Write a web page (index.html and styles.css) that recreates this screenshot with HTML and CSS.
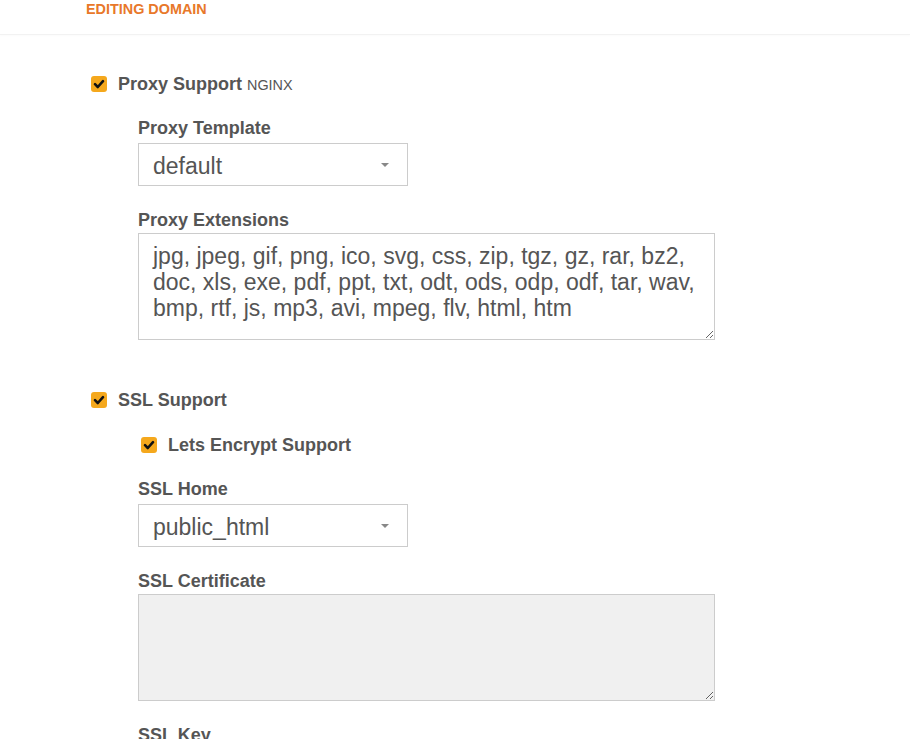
FILE: index.html
```html
<!DOCTYPE html>
<html>
<head>
<meta charset="utf-8">
<link rel="stylesheet" href="styles.css">
</head>
<body>
<header class="topbar"><span class="title">EDITING DOMAIN</span></header>
<main class="form">
  <div class="check-row">
    <span class="check"><svg viewBox="0 0 16 16" width="16" height="16"><path d="M4 8.2 L6.8 11 L12 5.2" fill="none" stroke="#111" stroke-width="2.6" stroke-linecap="round" stroke-linejoin="round"/></svg></span>
    <span class="check-label">Proxy Support <span class="tag">NGINX</span></span>
  </div>
  <div class="sub">
    <div class="field">
      <label class="label">Proxy Template</label>
      <div class="select"><span>default</span><svg class="caret" width="8" height="4" viewBox="0 0 8 4"><path d="M0 0 H8 L4 4 Z" fill="#888"/></svg></div>
    </div>
    <div class="field ext">
      <label class="label">Proxy Extensions</label>
      <textarea class="area">jpg, jpeg, gif, png, ico, svg, css, zip, tgz, gz, rar, bz2, doc, xls, exe, pdf, ppt, txt, odt, ods, odp, odf, tar, wav, bmp, rtf, js, mp3, avi, mpeg, flv, html, htm</textarea>
    </div>
  </div>

  <div class="check-row ssl">
    <span class="check"><svg viewBox="0 0 16 16" width="16" height="16"><path d="M4 8.2 L6.8 11 L12 5.2" fill="none" stroke="#111" stroke-width="2.6" stroke-linecap="round" stroke-linejoin="round"/></svg></span>
    <span class="check-label">SSL Support</span>
  </div>
  <div class="sub">
    <div class="check-row le">
      <span class="check"><svg viewBox="0 0 16 16" width="16" height="16"><path d="M4 8.2 L6.8 11 L12 5.2" fill="none" stroke="#111" stroke-width="2.6" stroke-linecap="round" stroke-linejoin="round"/></svg></span>
      <span class="check-label">Lets Encrypt Support</span>
    </div>
    <div class="field home">
      <label class="label">SSL Home</label>
      <div class="select"><span>public_html</span><svg class="caret" width="8" height="4" viewBox="0 0 8 4"><path d="M0 0 H8 L4 4 Z" fill="#888"/></svg></div>
    </div>
    <div class="field cert">
      <label class="label">SSL Certificate</label>
      <textarea class="area" disabled></textarea>
    </div>
    <div class="field">
      <label class="label">SSL Key</label>
    </div>
  </div>
</main>
</body>
</html>
```
FILE: styles.css
```css
html, body {
  margin: 0;
  padding: 0;
  background: #fff;
  font-family: "Liberation Sans", Arial, sans-serif;
  color: #555;
}
.topbar {
  height: 34px;
  border-bottom: 1px solid #f2f2f2;
  box-shadow: 0 1px 2px rgba(0,0,0,0.02);
  padding: 0 0 0 86px;
  box-sizing: content-box;
}
.title {
  display: block;
  font-size: 14.4px;
  line-height: 18px;
  font-weight: bold;
  color: #e8782a;
}
.form {
  padding: 39px 0 0 88px;
}
.check-row {
  display: flex;
  align-items: center;
  height: 20px;
}
.check {
  width: 16px;
  height: 16px;
  margin-left: 3px;
  margin-right: 11px;
  background: #f5a81c;
  border-radius: 3px;
  display: flex;
}
.check-label {
  font-size: 18px;
  font-weight: bold;
  line-height: 20px;
}
.tag {
  font-size: 14.4px;
  font-weight: normal;
}
.sub {
  padding-left: 50px;
}
.field {
  display: flex;
  flex-direction: column;
  align-items: flex-start;
  margin-top: 24px;
}
.label {
  font-size: 18px;
  font-weight: bold;
  line-height: 20px;
  margin-bottom: 5px;
}
.field.ext,
.field.cert {
  margin-top: 24px;
}
.field.ext .label,
.field.cert .label {
  margin-bottom: 3px;
}
.select {
  box-sizing: border-box;
  width: 270px;
  height: 43px;
  border: 1px solid #ccc;
  background: #fff;
  display: flex;
  align-items: center;
  justify-content: space-between;
  padding: 3px 18px 0 14px;
  font-size: 23px;
  color: #555;
}
.caret {
  display: block;
  margin-top: -3px;
}
.area {
  box-sizing: border-box;
  width: 577px;
  height: 107px;
  border: 1px solid #ccc;
  border-radius: 0;
  background: #fff;
  padding: 9px 14px;
  margin: 0;
  font-family: "Liberation Sans", Arial, sans-serif;
  font-size: 23px;
  line-height: 26px;
  color: #555;
  resize: vertical;
  outline: none;
}
.area:disabled {
  background: #f0f0f0;
}
.check-row.ssl {
  margin-top: 50px;
}
.check-row.le {
  margin-top: 25px;
}
.field.home {
  margin-top: 24px;
}
```
